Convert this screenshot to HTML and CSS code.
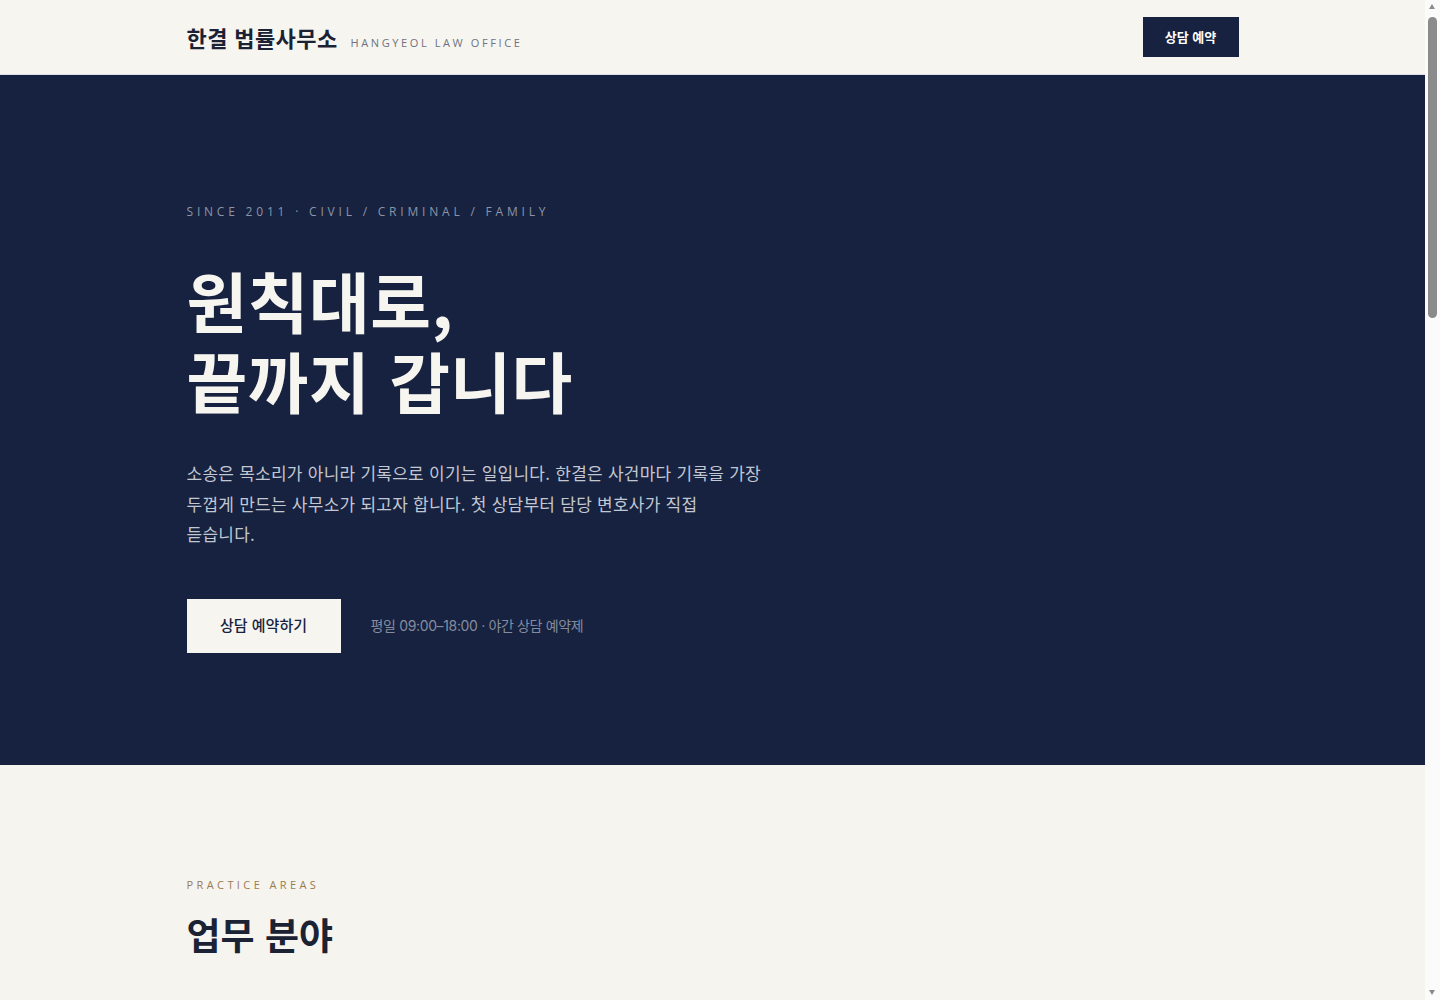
FILE: index.html
```html
<!DOCTYPE html>
<html lang="ko">
<head>
<meta charset="utf-8">
<title>한결 법률사무소</title>
<link rel="stylesheet" href="styles.css">
</head>
<body>
<div class="fake-scrollbar" aria-hidden="true">
  <span class="sb-arrow sb-up"></span>
  <span class="sb-thumb"></span>
  <span class="sb-arrow sb-down"></span>
</div>

<header class="site-header">
  <div class="container header-inner">
    <div class="brand">
      <span class="brand-ko">한결 법률사무소</span>
      <span class="brand-en">HANGYEOL LAW OFFICE</span>
    </div>
    <a class="header-btn" href="#">상담 예약</a>
  </div>
</header>

<section class="hero">
  <div class="container">
    <p class="hero-eyebrow">SINCE 2011 · CIVIL / CRIMINAL / FAMILY</p>
    <h1 class="hero-title">원칙대로,<br>끝까지 갑니다</h1>
    <p class="hero-text">소송은 목소리가 아니라 기록으로 이기는 일입니다. 한결은 사건마다 기록을 가장 두껍게 만드는 사무소가 되고자 합니다. 첫 상담부터 담당 변호사가 직접 듣습니다.</p>
    <div class="hero-actions">
      <a class="hero-btn" href="#">상담 예약하기</a>
      <span class="hero-hours">평일 09:00–18:00 · 야간 상담 예약제</span>
    </div>
  </div>
</section>

<section class="areas">
  <div class="container">
    <p class="section-eyebrow">PRACTICE AREAS</p>
    <h2 class="section-title">업무 분야</h2>
    <div class="area-grid">
      <article class="area-card">
        <span class="area-num">01</span>
        <h3 class="area-name">민사 소송</h3>
        <p class="area-desc">손해배상, 계약 분쟁, 부동산 분쟁 등 재산상 권리를 지키는 소송을 수행합니다.</p>
      </article>
      <article class="area-card">
        <span class="area-num">02</span>
        <h3 class="area-name">형사 변호</h3>
        <p class="area-desc">수사 초기 단계부터 재판까지, 피의자와 피해자 모두의 입장에서 조력합니다.</p>
      </article>
      <article class="area-card">
        <span class="area-num">03</span>
        <h3 class="area-name">가사 · 이혼</h3>
        <p class="area-desc">이혼, 양육권, 재산분할, 상속 문제를 신중하고 조용하게 해결합니다.</p>
      </article>
    </div>
  </div>
</section>

<section class="about">
  <div class="container about-inner">
    <div>
      <p class="section-eyebrow">ABOUT</p>
      <h2 class="section-title">사무소 소개</h2>
    </div>
    <div class="about-text">
      <p>한결 법률사무소는 2011년 개업 이래 민사, 형사, 가사 사건을 중심으로 의뢰인의 곁을 지켜왔습니다.</p>
      <p>모든 사건은 담당 변호사가 처음부터 끝까지 직접 맡으며, 진행 상황을 정기적으로 보고드립니다.</p>
    </div>
  </div>
</section>

<section class="contact">
  <div class="container">
    <p class="section-eyebrow">CONTACT</p>
    <h2 class="section-title light">상담 안내</h2>
    <p class="contact-text">서울특별시 서초구 서초대로 000, 5층 · 02-000-0000</p>
  </div>
</section>

<footer class="site-footer">
  <div class="container">© 2024 한결 법률사무소. All rights reserved.</div>
</footer>
</body>
</html>
```

FILE: styles.css
```css
* { box-sizing: border-box; }
html, body { margin: 0; padding: 0; }
body {
  font-family: "Open Sans", "Noto Sans CJK KR", sans-serif;
  background: #f6f4ef;
  color: #1a2238;
  padding-right: 15px;
  word-break: keep-all;
}
a { text-decoration: none; }
.container {
  max-width: 1100px;
  margin: 0 auto;
  padding: 0 24px;
}

/* simulated classic scrollbar of the reference window */
.fake-scrollbar {
  position: fixed;
  top: 0;
  right: 0;
  width: 15px;
  height: 100vh;
  background: #fbfbfb;
  z-index: 10;
}
.sb-thumb {
  position: absolute;
  left: 3px;
  top: 17px;
  width: 9px;
  height: 301px;
  border-radius: 5px;
  background: #8b8b8b;
}
.sb-arrow {
  position: absolute;
  left: 4px;
  width: 0;
  height: 0;
  border-left: 3.5px solid transparent;
  border-right: 3.5px solid transparent;
}
.sb-up { top: 4px; border-bottom: 5px solid #8b8b8b; }
.sb-down { bottom: 5px; border-top: 5px solid #8b8b8b; }

.site-header {
  background: #f7f5f0;
  border-bottom: 1px solid #dcdfe8;
}
.header-inner {
  height: 74px;
  display: flex;
  align-items: center;
  justify-content: space-between;
}
.brand { display: flex; align-items: baseline; gap: 13px; }
.brand-ko {
  font-family: "Noto Sans CJK KR", sans-serif;
  font-size: 22px;
  font-weight: 700;
  color: #1b2233;
  letter-spacing: 0.4px;
}
.brand-en {
  font-size: 11px;
  letter-spacing: 2.6px;
  color: #6e7280;
}
.header-btn {
  display: inline-flex;
  align-items: center;
  justify-content: center;
  width: 96px;
  height: 40px;
  background: #16223f;
  color: #ffffff;
  font-family: "Noto Sans CJK KR", sans-serif;
  font-size: 13px;
  font-weight: 700;
  margin-top: -1px;
}

.hero {
  background: #16223f;
  padding: 129px 0 112px;
}
.hero-eyebrow {
  margin: 0;
  font-size: 12px;
  line-height: 16px;
  letter-spacing: 3.8px;
  color: #8d94a8;
}
.hero-title {
  margin: 39px 0 0;
  font-family: "Noto Sans CJK KR", sans-serif;
  font-size: 66px;
  line-height: 80px;
  font-weight: 700;
  color: #f7f5f0;
  letter-spacing: 0.5px;
}
.hero-text {
  margin: 39px 0 0;
  max-width: 580px;
  font-family: "Noto Sans CJK KR", sans-serif;
  font-size: 17px;
  line-height: 30.5px;
  letter-spacing: 0.25px;
  color: #c3c7d2;
}
.hero-actions {
  margin-top: 49px;
  display: flex;
  align-items: center;
  gap: 30px;
}
.hero-btn {
  display: inline-flex;
  align-items: center;
  justify-content: center;
  width: 154px;
  height: 54px;
  background: #f7f5f0;
  color: #16223f;
  font-family: "Noto Sans CJK KR", sans-serif;
  font-size: 15px;
  font-weight: 500;
  padding-bottom: 2px;
}
.hero-hours {
  font-family: "Inter", "Noto Sans CJK KR", sans-serif;
  font-size: 14px;
  letter-spacing: -0.35px;
  color: #858ca0;
  padding-bottom: 2px;
}

.areas { padding: 112px 0 120px; }
.section-eyebrow {
  margin: 0;
  font-size: 11px;
  line-height: 15px;
  letter-spacing: 3.4px;
  color: #9a7b4f;
}
.section-title {
  margin: 18px 0 0;
  font-family: "Noto Sans CJK KR", sans-serif;
  font-size: 37px;
  font-weight: 700;
  color: #1b2233;
  line-height: 1.3;
}
.section-title.light { color: #f7f5f0; }
.area-grid {
  margin-top: 72px;
  display: grid;
  grid-template-columns: repeat(3, 1fr);
  gap: 24px;
}
.area-card {
  background: #ffffff;
  border: 1px solid #e4e1d8;
  padding: 40px 32px 48px;
  min-height: 320px;
}
.area-num { font-size: 13px; color: #9a7b4f; letter-spacing: 2px; }
.area-name {
  margin: 24px 0 0;
  font-family: "Noto Sans CJK KR", sans-serif;
  font-size: 22px;
  color: #1b2233;
}
.area-desc {
  margin: 16px 0 0;
  font-family: "Noto Sans CJK KR", sans-serif;
  font-size: 15px;
  line-height: 1.8;
  color: #5a6070;
}

.about { padding: 120px 0; background: #efece4; }
.about-inner {
  display: grid;
  grid-template-columns: 1fr 1.4fr;
  gap: 64px;
  min-height: 520px;
}
.about-text p {
  margin: 0 0 24px;
  font-family: "Noto Sans CJK KR", sans-serif;
  font-size: 17px;
  line-height: 1.9;
  color: #3a4052;
}

.contact {
  background: #16223f;
  padding: 120px 0;
  min-height: 560px;
}
.contact-text {
  margin: 28px 0 0;
  font-family: "Noto Sans CJK KR", sans-serif;
  font-size: 16px;
  color: #c3c7d2;
}
.site-footer {
  background: #111a31;
  color: #7d8498;
  font-size: 13px;
  padding: 40px 0;
}
```
